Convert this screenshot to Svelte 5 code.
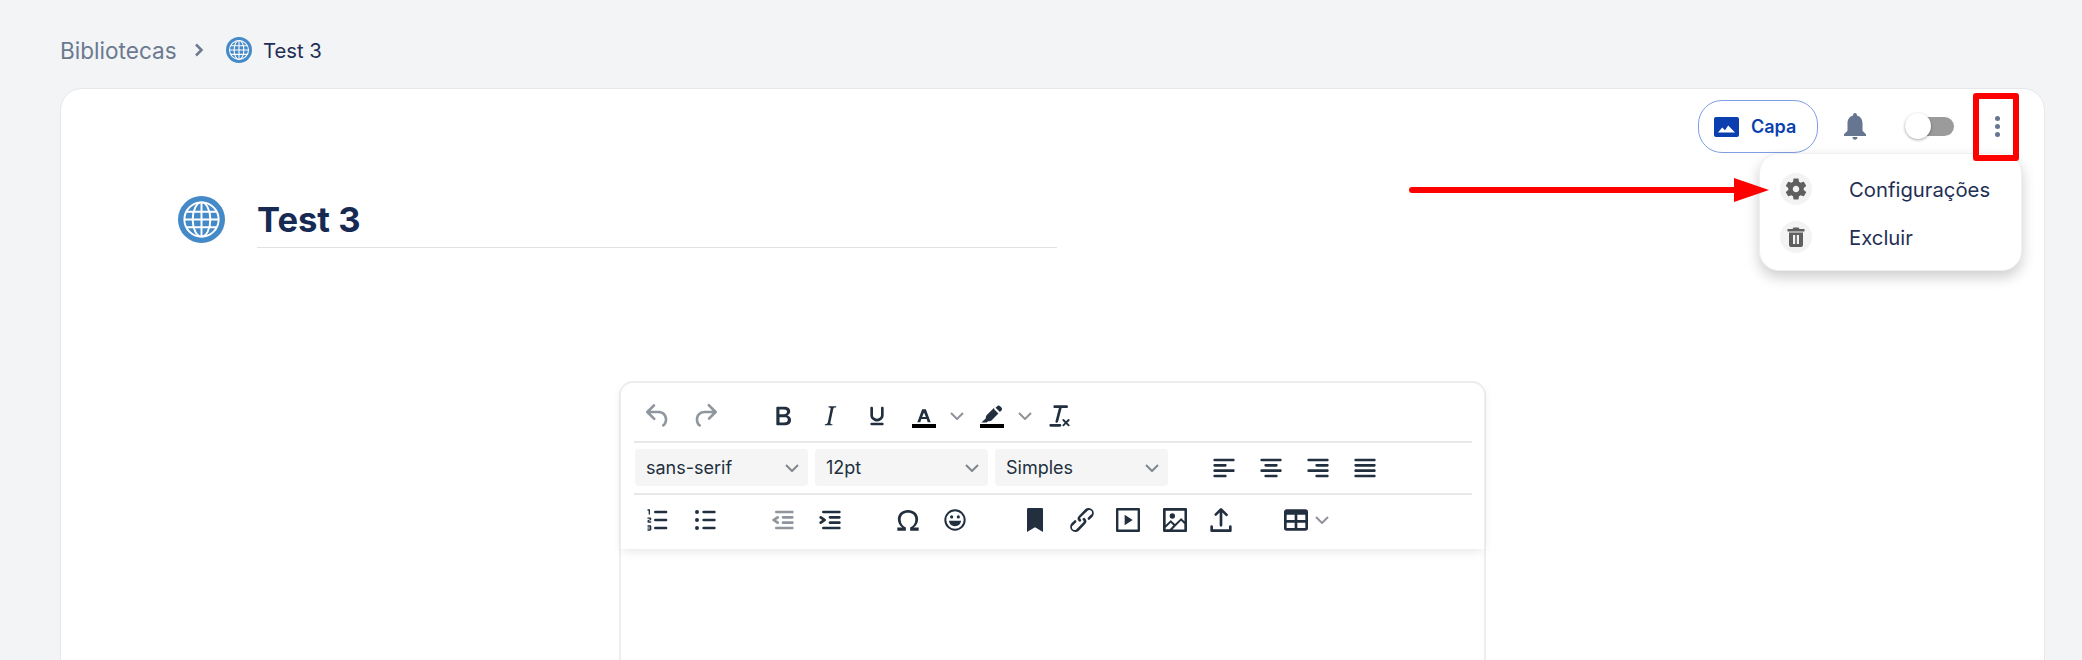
<script>
  const I = {
    undo: 'M6.4 8H12c3.7 0 6.2 2 6.8 5.1.6 2.7-.4 5.6-2.3 6.8a1 1 0 0 1-1-1.8c1.1-.6 1.8-2.7 1.4-4.6-.5-2.1-2.1-3.5-4.9-3.5H6.4l3.3 3.3a1 1 0 1 1-1.4 1.4l-5-5a1 1 0 0 1 0-1.4l5-5a1 1 0 0 1 1.4 1.4L6.4 8z',
    redo: 'M17.6 10H12c-2.8 0-4.4 1.4-4.9 3.5-.4 2 .3 4 1.4 4.6a1 1 0 1 1-1 1.8c-2-1.2-2.9-4.1-2.3-6.8.6-3 3-5.1 6.8-5.1h5.6l-3.3-3.3a1 1 0 1 1 1.4-1.4l5 5a1 1 0 0 1 0 1.4l-5 5a1 1 0 0 1-1.4-1.4l3.3-3.3z',
    bold: 'M7.8 19c-.3 0-.5 0-.6-.2l-.2-.5V5.7c0-.2 0-.4.2-.5l.6-.2h5c1.5 0 2.7.3 3.5 1 .7.6 1.1 1.4 1.1 2.5a3 3 0 0 1-.6 1.9c-.4.6-1 1-1.6 1.2.4.1.9.3 1.3.6s.8.7 1 1.2c.4.4.5 1 .5 1.6 0 1.3-.4 2.3-1.3 3-.8.7-2.1 1-3.8 1H7.8zm5-8.3c.6 0 1.2-.1 1.6-.5.4-.3.6-.7.6-1.3 0-1.1-.8-1.7-2.3-1.7H9.3v3.5h3.4zm.5 6c.7 0 1.3-.1 1.7-.4.4-.4.6-.9.6-1.5s-.2-1-.7-1.4c-.4-.3-1-.4-2-.4H9.4v3.8h4z',
    italic: 'M16.7 4.7l-.1.9h-.3c-.6 0-1 0-1.4.3-.3.3-.4.6-.5 1.1l-2.1 9.8v.6c0 .5.4.8 1.4.8h.2l-.2.8H8l.2-.8h.2c1.1 0 1.8-.5 2-1.5l2-9.8.1-.5c0-.6-.4-.8-1.4-.8h-.3l.2-.9h5.800z',
    underline: 'M16 5c.6 0 1 .4 1 1v5.5a4 4 0 0 1-.4 1.8l-1 1.4a5.3 5.3 0 0 1-5.5 1 5 5 0 0 1-1.6-1c-.5-.4-.8-.9-1.1-1.4a4 4 0 0 1-.4-1.8V6c0-.6.4-1 1-1s1 .4 1 1v5.5c0 .3 0 .6.2 1l.6.7a3.3 3.3 0 0 0 2.2.8 3.4 3.4 0 0 0 2.2-.8c.3-.2.4-.5.6-.8l.2-.9V6c0-.6.4-1 1-1zM8 17h8c.6 0 1 .4 1 1s-.4 1-1 1H8a1 1 0 0 1 0-2z',
    fore: 'M10.6 7h2.8l3.600 9.6h-2.200l-.8-2.3h-4l-.8 2.3H7L10.6 7zm1.4 2.3l-1.400 3.400h2.800L12 9.300z',
    hilite: 'M15.900 4.600a1.600 1.600 0 0 1 2.200 0l1 1a1.600 1.600 0 0 1 0 2.200l-1.200 1.200-3.200-3.200 1.200-1.200zM13.600 6.900l3.200 3.200-5.200 5.200c-.4.4-1.200.6-1.800.6l-.8.1-.9.9H4l3.300-3.100.1-1c0-.6.3-1.200.7-1.600l5.500-5.300z',
    clear: 'M13.200 6a1 1 0 0 1 0 .2l-2.600 10a1 1 0 0 1-1 .8h-.2a.8.8 0 0 1-.8-1l2.600-10H8a1 1 0 1 1 0-2h9a1 1 0 0 1 0 2h-3.800zM5 18h7a1 1 0 0 1 0 2H5a1 1 0 0 1 0-2zm13 1.500L16.500 18 15 19.500a.7.7 0 0 1-1-1l1.500-1.500-1.500-1.500a.7.7 0 0 1 1-1l1.500 1.500 1.500-1.500a.7.7 0 0 1 1 1L17.500 17l1.500 1.500a.7.7 0 0 1-1 1z',
    alignl: 'M5 5h14c.6 0 1 .4 1 1s-.4 1-1 1H5a1 1 0 1 1 0-2zm0 4h8c.6 0 1 .4 1 1s-.4 1-1 1H5a1 1 0 1 1 0-2zm0 8h8c.6 0 1 .4 1 1s-.4 1-1 1H5a1 1 0 0 1 0-2zm0-4h14c.6 0 1 .4 1 1s-.4 1-1 1H5a1 1 0 0 1 0-2z',
    alignc: 'M5 5h14c.6 0 1 .4 1 1s-.4 1-1 1H5a1 1 0 1 1 0-2zm3 4h8c.6 0 1 .4 1 1s-.4 1-1 1H8a1 1 0 1 1 0-2zm0 8h8c.6 0 1 .4 1 1s-.4 1-1 1H8a1 1 0 0 1 0-2zm-3-4h14c.6 0 1 .4 1 1s-.4 1-1 1H5a1 1 0 0 1 0-2z',
    alignr: 'M5 5h14c.6 0 1 .4 1 1s-.4 1-1 1H5a1 1 0 1 1 0-2zm6 4h8c.6 0 1 .4 1 1s-.4 1-1 1h-8a1 1 0 0 1 0-2zm0 8h8c.6 0 1 .4 1 1s-.4 1-1 1h-8a1 1 0 0 1 0-2zm-6-4h14c.6 0 1 .4 1 1s-.4 1-1 1H5a1 1 0 0 1 0-2z',
    alignj: 'M5 5h14c.6 0 1 .4 1 1s-.4 1-1 1H5a1 1 0 1 1 0-2zm0 4h14c.6 0 1 .4 1 1s-.4 1-1 1H5a1 1 0 1 1 0-2zm0 4h14c.6 0 1 .4 1 1s-.4 1-1 1H5a1 1 0 0 1 0-2zm0 4h14c.6 0 1 .4 1 1s-.4 1-1 1H5a1 1 0 0 1 0-2z',
    ol: 'M10 17h8c.6 0 1 .4 1 1s-.4 1-1 1h-8a1 1 0 0 1 0-2zm0-6h8c.6 0 1 .4 1 1s-.4 1-1 1h-8a1 1 0 0 1 0-2zm0-6h8c.6 0 1 .4 1 1s-.4 1-1 1h-8a1 1 0 1 1 0-2zM6 4v3.500c0 .3-.2.5-.5.5a.5.5 0 0 1-.5-.5V5h-.5a.5.5 0 0 1 0-1H6zm-1 8.800l.2.2h1.300c.3 0 .5.2.5.5s-.2.5-.5.5H4.900a1 1 0 0 1-.9-1V13c0-.4.3-.8.6-1l1.200-.4.2-.3a.2.2 0 0 0-.2-.2H4.500a.5.5 0 0 1-.5-.5c0-.3.2-.5.5-.5h1.600c.5 0 .9.4.9 1v.1c0 .4-.3.8-.6 1l-1.200.4-.2.3zM7 17v2c0 .6-.4 1-1 1H4.500a.5.5 0 0 1 0-1h1.200c.2 0 .3-.1.3-.3 0-.2-.1-.3-.3-.3H4.400a.4.4 0 1 1 0-.8h1.300c.2 0 .3-.1.3-.3 0-.2-.1-.3-.3-.3H4.500a.5.5 0 1 1 0-1H6c.6 0 1 .4 1 1z',
    ul: 'M11 5h8c.6 0 1 .4 1 1s-.4 1-1 1h-8a1 1 0 0 1 0-2zm0 6h8c.6 0 1 .4 1 1s-.4 1-1 1h-8a1 1 0 0 1 0-2zm0 6h8c.6 0 1 .4 1 1s-.4 1-1 1h-8a1 1 0 0 1 0-2zM4.500 6a1.500 1.500 0 1 1 3 0 1.500 1.500 0 0 1-3 0zm0 6a1.500 1.500 0 1 1 3 0 1.500 1.500 0 0 1-3 0zm0 6a1.500 1.500 0 1 1 3 0 1.500 1.500 0 0 1-3 0z',
    outdent: 'M7 5h12c.6 0 1 .4 1 1s-.4 1-1 1H7a1 1 0 1 1 0-2zm5 4h7c.6 0 1 .4 1 1s-.4 1-1 1h-7a1 1 0 0 1 0-2zm0 4h7c.6 0 1 .4 1 1s-.4 1-1 1h-7a1 1 0 0 1 0-2zm-5 4h12a1 1 0 0 1 0 2H7a1 1 0 0 1 0-2zm1.600-3.800a1 1 0 0 1-1.200 1.600l-3-2a1 1 0 0 1 0-1.600l3-2a1 1 0 0 1 1.200 1.600L6.800 12l1.800 1.200z',
    indent: 'M7 5h12c.6 0 1 .4 1 1s-.4 1-1 1H7a1 1 0 1 1 0-2zm5 4h7c.6 0 1 .4 1 1s-.4 1-1 1h-7a1 1 0 0 1 0-2zm0 4h7c.6 0 1 .4 1 1s-.4 1-1 1h-7a1 1 0 0 1 0-2zm-5 4h12a1 1 0 0 1 0 2H7a1 1 0 0 1 0-2zm-2.600-3.800L6.200 12l-1.800-1.200a1 1 0 0 1 1.200-1.600l3 2a1 1 0 0 1 0 1.600l-3 2a1 1 0 1 1-1.200-1.600z',
    omega: 'M12 4.500c-4.300 0-7.600 2.700-7.600 6.900 0 2.700 1.300 4.900 3.400 6.300H4v2.300h6.400v-2.400c-2.400-1-3.900-3.200-3.900-6 0-3 2.200-5 5.500-5s5.500 2 5.500 5c0 2.800-1.500 5-3.900 6v2.400H20v-2.300h-3.800c2.100-1.400 3.400-3.600 3.400-6.300 0-4.200-3.300-6.900-7.600-6.900z',
    smile: 'M12 4a8 8 0 1 1 0 16 8 8 0 0 1 0-16zm0 1.500a6.500 6.500 0 1 0 0 13 6.500 6.500 0 0 0 0-13zM9.500 8.500a1.200 1.200 0 1 1 0 2.400 1.200 1.200 0 0 1 0-2.400zm5 0a1.200 1.200 0 1 1 0 2.400 1.200 1.200 0 0 1 0-2.400zM7.800 12.500h8.400c.2 0 .3.100.3.300-.2 2.200-2 3.900-4.500 3.900s-4.300-1.700-4.500-3.900c0-.2.100-.3.300-.3z',
    bookmark: 'M6 4v17l6-3.500 6 3.500V4c0-.6-.4-1-1-1H7a1 1 0 0 0-1 1z',
    link: 'M6.200 12.300a1 1 0 0 1 1.400 1.400l-2 2a2 2 0 1 0 2.600 2.800l4.800-4.800a1 1 0 0 0 0-1.400 1 1 0 1 1 1.400-1.300 2.900 2.900 0 0 1 0 4L9.600 20a3.900 3.900 0 0 1-5.500-5.500l2-2zm11.600-.6a1 1 0 0 1-1.400-1.400l2-2a2 2 0 1 0-2.600-2.800L11 10a1 1 0 0 0 0 1.400A1 1 0 1 1 9.600 13a2.900 2.900 0 0 1 0-4L14.400 4a3.900 3.900 0 0 1 5.500 5.500l-2 2z',
    media: 'M4 3h16c.6 0 1 .4 1 1v16c0 .6-.4 1-1 1H4a1 1 0 0 1-1-1V4c0-.6.4-1 1-1zm.8 1.800v14.400h14.400V4.800H4.800zM9.500 8l6 4-6 4V8z',
    image: 'M5 15.700l3.300-3.200c.3-.3.7-.3 1 0L12 15l4.100-4c.3-.4.8-.4 1 0l2 1.900V5H5v10.700zM5 18V19h3l2.800-2.900-2-2L5 17.900zm14-3l-2.500-2.400-6.400 6.500H19v-4zM4 3h16c.6 0 1 .4 1 1v16c0 .6-.4 1-1 1H4a1 1 0 0 1-1-1V4c0-.6.400-1 1-1zm6 8a2 2 0 1 0 0-4 2 2 0 0 0 0 4z',
    upload: 'M18 19v-2a1 1 0 0 1 2 0v3c0 .6-.4 1-1 1H5a1 1 0 0 1-1-1v-3a1 1 0 0 1 2 0v2h12zM11 6.400L8.700 8.700a1 1 0 0 1-1.400-1.400l4-4a1 1 0 0 1 1.400 0l4 4a1 1 0 1 1-1.400 1.400L13 6.400V16a1 1 0 0 1-2 0V6.400z',
    table: 'M19 4a2 2 0 0 1 2 2v12a2 2 0 0 1-2 2H5a2 2 0 0 1-2-2V6c0-1.100.9-2 2-2h14zM5 14v4h6v-4H5zm14 0h-6v4h6v-4zm0-6h-6v4h6V8zM5 12h6V8H5v4z',
    bar: 'M3 18h18v3H3z'
  };
  const row3 = [
    ['g-31', [['ol'], ['ul']]],
    ['g-31', [['outdent', true], ['indent']]],
    ['g-34', [['omega'], ['smile']]],
    ['g-narrow', [['bookmark'], ['link'], ['media'], ['image'], ['upload']]]
  ];
  const aligns = ['alignl', 'alignc', 'alignr', 'alignj'];
  const selects = ['sans-serif', '12pt', 'Simples'];
</script>

{#snippet tb(name, off = false)}
  <button class="tb" class:off>
    <svg viewBox="0 0 24 24" width="32" height="32"><path d={I[name]} /></svg>
  </button>
{/snippet}

{#snippet chev(cls)}
  <svg class={cls} viewBox="0 0 14 8" width="14" height="8"><path d="M1 1l6 6 6-6" /></svg>
{/snippet}

{#snippet globe(size)}
  <svg viewBox="0 0 48 48" width={size} height={size} class="globe">
    <circle cx="24" cy="24" r="24" class="gbg" />
    <g class="gl">
      <circle cx="24" cy="24" r="17.500" />
      <ellipse cx="24" cy="24" rx="9" ry="17.500" />
      <path d="M24 6.500v35M6.500 24h35M9 16h30M9 32h30" />
    </g>
  </svg>
{/snippet}

<div class="page">
  <nav class="crumbs">
    <span class="parent">Bibliotecas</span>
    <svg class="sep" viewBox="0 0 10 14" width="10" height="14"><path d="M2 1.500l5.500 5.500L2 12.500" /></svg>
    {@render globe(26)}
    <span class="current">Test 3</span>
  </nav>

  <main class="card">
    <div class="actions">
      <button class="capa">
        <svg viewBox="0 0 25 20" width="25" height="20"><rect width="25" height="20" rx="2" class="capa-bg" /><path class="capa-m" d="M4 15.500l4.200-5 2.800 2.800 3.200-4.800 6.800 7z" /></svg>
        <span>Capa</span>
      </button>
      <svg class="bell" viewBox="0 0 22 27" width="22" height="27"><path d="M11 0c1.100 0 1.900.8 1.900 1.900v.7C16.600 3.500 18.500 6.700 18.500 10.500v7.200L22 21.200v1.800H0v-1.800l3.500-3.500v-7.200c0-3.800 1.900-7 5.600-7.900v-.7C9.100.8 9.900 0 11 0zM8.500 24h5c0 1.400-1.100 2.800-2.500 2.800S8.500 25.400 8.500 24z" /></svg>
      <div class="toggle"><span class="knob"></span></div>
      <div class="dots"><i></i><i></i><i></i></div>
    </div>

    <header class="title">
      {@render globe(47)}
      <h1>Test 3</h1>
    </header>

    <section class="editor">
      <div class="toolbar">
        <div class="row row-top">
          <div class="group g-31">
            {@render tb('undo', true)}
            {@render tb('redo', true)}
          </div>
          <div class="group">
            {@render tb('bold')}
            {@render tb('italic')}
            {@render tb('underline')}
            <button class="tb">
              <svg viewBox="0 0 24 24" width="32" height="32"><path d={I.fore} /><path class="swatch" d={I.bar} /></svg>
            </button>
            <span class="mini">{@render chev('cv')}</span>
            <button class="tb tb-after">
              <svg viewBox="0 0 24 24" width="32" height="32"><path d={I.hilite} /><path class="swatch" d={I.bar} /></svg>
            </button>
            <span class="mini">{@render chev('cv')}</span>
            <span class="tb-after">{@render tb('clear')}</span>
          </div>
        </div>
        <div class="row row-mid">
          <div class="selects">
            {#each selects as s}
              <div class="select"><span>{s}</span>{@render chev('cv cv-s')}</div>
            {/each}
          </div>
          <div class="group">
            {#each aligns as a}{@render tb(a)}{/each}
          </div>
        </div>
        <div class="row row-last">
          {#each row3 as [cls, g]}
            <div class="group {cls}">
              {#each g as b}{@render tb(b[0], b[1])}{/each}
            </div>
          {/each}
          <div class="group table-group">
            <button class="tb tb-table"><svg viewBox="0 0 24 24" width="32" height="32"><path d={I.table} /></svg></button>
            <span class="mini mini-t">{@render chev('cv')}</span>
          </div>
        </div>
      </div>
    </section>

    <div class="menu">
      <div class="item">
        <span class="ic"><svg viewBox="0 0 24 24" width="26" height="26"><path d="M19.140 12.940c.04-.3.06-.61.06-.94 0-.32-.02-.64-.07-.94l2.030-1.580c.18-.14.23-.41.12-.61l-1.920-3.320c-.12-.22-.37-.29-.59-.22l-2.390.96c-.5-.38-1.030-.7-1.620-.94l-.36-2.540c-.04-.24-.24-.41-.48-.41h-3.840c-.24 0-.43.17-.47.41l-.36 2.540c-.59.24-1.130.57-1.620.94l-2.390-.96c-.22-.08-.47 0-.59.22L2.740 8.870c-.12.21-.08.47.12.61l2.030 1.580c-.05.3-.09.63-.09.94s.02.64.07.94l-2.030 1.580c-.18.14-.23.41-.12.61l1.920 3.320c.12.22.37.29.59.22l2.390-.96c.5.38 1.030.7 1.620.94l.36 2.540c.05.24.24.41.48.41h3.840c.24 0 .44-.17.47-.41l.36-2.540c.59-.24 1.130-.56 1.620-.94l2.390.96c.22.08.47 0 .59-.22l1.920-3.320c.12-.22.07-.47-.12-.61l-2.010-1.580zM12 15c-1.650 0-3-1.350-3-3s1.350-3 3-3 3 1.350 3 3-1.350 3-3 3z" /></svg></span>
        <span>Configurações</span>
      </div>
      <div class="item">
        <span class="ic"><svg viewBox="0 0 24 24" width="24" height="24"><path fill-rule="evenodd" d="M9.500 2.500h5l1 1.500H20.500v2.500h-17V4h5l1-1.500zM5 7.500h14V20a2 2 0 0 1-2 2H7a2 2 0 0 1-2-2V7.500zM9 10v9h2.200v-9H9zm3.800 0v9H15v-9h-2.200z" /></svg></span>
        <span>Excluir</span>
      </div>
    </div>
  </main>

  <!-- Annotations painted over the screenshot -->
  <div class="note-box"></div>
  <svg class="note-arrow" viewBox="0 0 360 24" width="360" height="24"><path d="M3 9h322V0l35 12-35 12v-9H3a3 3 0 0 1 0-6z" /></svg>
</div>

<style>
  :global(body) { margin: 0; background: #f3f4f6; overflow: hidden; }
  .page {
    position: relative;
    height: 660px;
    overflow: hidden;
    padding: 0 37px 0 60px;
    font-family: Inter, "Noto Sans", sans-serif;
    color: #1a2b52;
  }
  .crumbs { height: 88px; padding-top: 37px; box-sizing: border-box; display: flex; align-items: flex-start; font-size: 20.300px; line-height: 28px; }
  .parent { color: #6b7a90; width: 134px; font-size: 22.600px; }
  .sep { fill: none; stroke: #6b7a90; stroke-width: 2.500; margin: 6px 22px 0 0; width: 10px; }
  .current { margin-left: 11px; color: #1f2f55; }
  .gbg { fill: #4489c8; }
  .gl { fill: none; stroke: #fff; stroke-width: 2; }

  .card {
    position: relative;
    height: 620px;
    background: #fff;
    border: 1px solid #e5e7eb;
    border-radius: 22px;
    box-sizing: border-box;
  }
  .actions { display: flex; align-items: center; justify-content: flex-end; padding: 11px 44px 0 0; height: 64px; box-sizing: border-box; }
  .capa {
    display: flex; align-items: center; gap: 12px;
    height: 53px; width: 120px; box-sizing: border-box; padding: 0 15px;
    background: #fff; border: 1px solid #7f9fe3; border-radius: 24px;
    color: #0b3fb0; font: 600 18px Inter, sans-serif;
  }
  .capa-bg { fill: #0b3fb0; }
  .capa-m { fill: #fff; }
  .bell { fill: #667590; margin-left: 26px; }
  .toggle { position: relative; width: 49px; height: 19px; margin-left: 39px; background: #9b9b9b; border-radius: 10px; }
  .knob { position: absolute; left: 0; top: -4px; width: 26px; height: 26px; border-radius: 50%; background: #fff; box-shadow: 0 1px 3px rgba(0,0,0,.35); }
  .dots { width: 5px; margin-left: 41px; display: flex; flex-direction: column; gap: 3px; }
  .dots i { width: 5px; height: 5px; border-radius: 50%; background: #667590; }

  .title { display: flex; align-items: center; gap: 32px; margin: 43px 0 0 117px; height: 47px; }
  h1 { margin: 5px 0 0; width: 800px; height: 52px; box-sizing: border-box; font-size: 34.600px; line-height: 47px; font-weight: 700; color: #172a54; border-bottom: 1px solid #dfe1e5; }

  .editor { width: 867px; margin: 138px auto 0; height: 400px; box-sizing: border-box; border: 2px solid #eeeeee; border-radius: 14px; }
  .toolbar { height: 166px; box-sizing: border-box; padding: 0 13px 0 14px; box-shadow: 0 4px 10px -2px rgba(0,0,0,.1); margin: 0 -1px; }
  .row { display: flex; box-sizing: border-box; }
  .row-top { height: 60px; padding-top: 14px; border-bottom: 2px solid #e8e8e8; }
  .row-mid { height: 52px; padding-bottom: 1px; align-items: center; border-bottom: 2px solid #e8e8e8; }
  .row-last { height: 54px; padding-top: 6px; }
  .group { display: flex; margin-right: 32px; }
  .g-31 { margin-right: 31px; }
  .g-34 { margin-right: 34px; }
  .g-narrow .tb { width: 46.500px; }
  .tb { width: 47px; height: 38px; border: 0; padding: 0; background: none; display: flex; align-items: center; justify-content: center; flex: none; }
  .tb svg { fill: #222f3e; }
  .tb.off svg { opacity: .5; }
  .tb svg .swatch { fill: #000; }
  .tb-after { margin-left: 2px; display: block; }
  button.tb-after { display: flex; }
  .mini { width: 19px; height: 38px; display: flex; align-items: center; justify-content: center; }
  .mini-t { width: 16px; }
  .tb-table { width: 36px; }
  .table-group { margin-left: 1px; }
  .cv { fill: none; stroke: #8f949b; stroke-width: 2; }
  .cv-s { stroke: #80868e; }
  .selects { display: flex; gap: 7px; margin: 0 32px 0 1px; }
  .select { width: 173px; height: 37px; background: #f5f5f5; border-radius: 4px; box-sizing: border-box; padding: 0 9px 0 11px; display: flex; align-items: center; justify-content: space-between; font-size: 18px; color: #222f3e; }

  .menu {
    position: absolute; left: 1698px; top: 64px; width: 263px; height: 118px; box-sizing: border-box;
    background: #fff; border-radius: 20px; border: 1px solid #eef0f2;
    box-shadow: 0 6px 14px rgba(0,0,0,.2);
    padding: 11px 0 0 20px;
  }
  .item { display: flex; align-items: center; height: 48px; font-size: 20.300px; color: #1f2f55; gap: 37px; }
  .ic { width: 32px; height: 32px; border-radius: 50%; background: #f3f3f3; display: flex; align-items: center; justify-content: center; }
  .ic svg { fill: #5f5f5f; }

  .note-box { position: absolute; left: 1973px; top: 93px; width: 46px; height: 68px; box-sizing: border-box; border: 6px solid #ff0000; border-radius: 3px; }
  .note-arrow { position: absolute; left: 1409px; top: 178px; fill: #ff0000; }
</style>
